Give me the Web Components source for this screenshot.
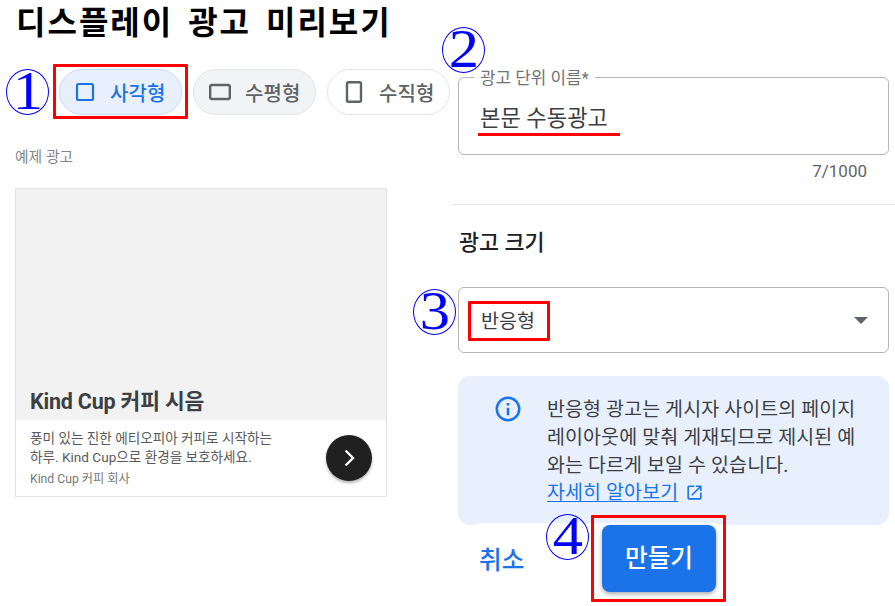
<!DOCTYPE html>
<html lang="ko"><head><meta charset="utf-8">
<style>
html,body{margin:0;padding:0;background:#fff}
body{width:895px;height:606px;overflow:hidden;position:relative;font-family:Roboto,"Noto Sans CJK KR",sans-serif;color:#3c4043}
</style></head><body>
<preview-page></preview-page>
<script>
const KR='Roboto,"Noto Sans CJK KR",sans-serif';
function def(name,css,html){
  customElements.define(name,class extends HTMLElement{
    constructor(){super();const r=this.attachShadow({mode:'open'});r.innerHTML=`<style>${css}</style>${typeof html==='function'?html(this):html}`;}
  });
}
const icons={
 square:'<svg width="24" height="24" viewBox="0 0 24 24"><rect x="4" y="4" width="16" height="16" rx="1.5" fill="none" stroke="currentColor" stroke-width="2.2"/></svg>',
 wide:'<svg width="24" height="24" viewBox="0 0 24 24"><rect x="2.2" y="5" width="19.6" height="14" rx="1.5" fill="none" stroke="currentColor" stroke-width="2.4"/></svg>',
 tall:'<svg width="24" height="24" viewBox="0 0 24 24"><rect x="5" y="2.2" width="14" height="19.6" rx="1.5" fill="none" stroke="currentColor" stroke-width="2.4"/></svg>'
};
def('shape-chip',`
 :host{display:inline-flex;align-items:center;box-sizing:border-box;width:123px;height:46px;border-radius:23px;border:1px solid #e3e4e6;background:#fff;color:#5f6368;font:500 20px ${KR};letter-spacing:.1px;padding-left:14px;gap:13px}
 :host([active]){background:#e8f0fe;border-color:#c6dafc;color:#1a73e8;padding-left:13px}
 :host([soft]){background:#f1f3f4}
 svg{display:block}
 span{display:flex}
`,h=>`<span>${icons[h.getAttribute('icon')]}</span><slot></slot>`);

def('circle-num',`
 :host{position:absolute;box-sizing:border-box;width:43px;height:46px;border:1px solid #0000ff;border-radius:50%;display:flex;align-items:center;justify-content:center;color:#00f;font:400 55px/46px "Liberation Serif",serif;background:transparent;z-index:5}
 span{display:block;transform:translateY(-1px) scaleX(1.1)}
`,`<span><slot></slot></span>`);

def('red-box',`
 :host{position:absolute;box-sizing:border-box;border:3px solid #f00;border-radius:1px;pointer-events:none;z-index:4}
`,``);

def('ad-card',`
 :host{display:flex;flex-direction:column;box-sizing:border-box;width:372px;height:309px;border:1px solid #e2e2e2;margin-left:15px;margin-top:21px;background:#fff}
 .top{height:231px;background:#f2f2f2;display:flex;align-items:flex-end;box-sizing:border-box;padding:0 14px 4px}
 h3{margin:0;font:700 21.500px/28px ${KR};color:#3c4043;letter-spacing:-.2px}
 .bot{flex:1;display:flex;align-items:flex-start;padding:9px 14px 0 14px}
 .txt{flex:1;white-space:nowrap}
 p{margin:0;font:400 13.600px/19px ${KR};color:#5a5a5a}
 small{display:block;margin-top:4px;font:400 12.200px/16px ${KR};color:#777}
 .go{width:46px;height:46px;border-radius:50%;background:#202020;box-shadow:0 2px 3px rgba(0,0,0,.3);display:flex;align-items:center;justify-content:center;margin-top:6px;margin-left:-1px}
`,`<div class="top"><h3>Kind Cup 커피 시음</h3></div>
<div class="bot"><div class="txt"><p>풍미 있는 진한 에티오피아 커피로 시작하는<br>하루. Kind Cup으로 환경을 보호하세요.</p><small>Kind Cup 커피 회사</small></div>
<div class="go"><svg width="24" height="24" viewBox="0 0 24 24"><path d="M8.6 4.5 16 12l-7.4 7.5" fill="none" stroke="#fff" stroke-width="2.4"/></svg></div></div>`);

def('outlined-input',`
 :host{display:block;box-sizing:border-box;position:relative;height:78px;border:1px solid #b3b6ba;border-radius:6px;padding:0 21px}
 label{position:absolute;left:15px;top:-10px;background:#fff;padding:0 6px;font:400 16.900px/20px ${KR};color:#6f7377}
 div{font:400 22.200px/30px ${KR};color:#3c4043;padding-top:25px}
`,`<label>광고 단위 이름*</label><div>본문 수동광고</div>`);

def('select-box',`
 :host{display:flex;align-items:center;justify-content:space-between;box-sizing:border-box;height:66px;border:1px solid #b3b6ba;border-radius:6px;padding:3px 20px 0 22px;font:400 19.500px/26px ${KR};color:#3c4043}
 i{display:block;width:0;height:0;border-left:7px solid transparent;border-right:7px solid transparent;border-top:7px solid #5f6368;margin-top:-2px}
`,`<slot></slot><i></i>`);

def('info-box',`
 :host{display:flex;box-sizing:border-box;height:149px;background:#e8f0fe;border-radius:12px;padding:20px 20px 0 35px;gap:24px;font:400 19.500px/27.800px ${KR};color:#3c4043}
 svg{flex:none;display:block;margin-top:-2px}
 a{color:#1a73e8;text-decoration:underline;text-underline-offset:2px}
 div{white-space:nowrap;letter-spacing:.1px}
`,`<svg width="30" height="30" viewBox="0 0 24 24"><circle cx="12" cy="12" r="9" fill="none" stroke="#1a73e8" stroke-width="2"/><rect x="11" y="11" width="2" height="6" fill="#1a73e8"/><rect x="11" y="7.2" width="2" height="2" fill="#1a73e8"/></svg>
<div>반응형 광고는 게시자 사이트의 페이지<br>레이아웃에 맞춰 게재되므로 제시된 예<br>와는 다르게 보일 수 있습니다.<br><a href="#">자세히 알아보기</a><svg style="vertical-align:-3px;margin:0 0 0 7px;display:inline-block" width="19" height="19" viewBox="0 0 24 24"><path d="M19 19H5V5h7V3H5a2 2 0 0 0-2 2v14a2 2 0 0 0 2 2h14a2 2 0 0 0 2-2v-7h-2v7zM14 3v2h3.6l-9.8 9.8 1.4 1.4L19 6.400V10h2V3h-7z" fill="#1a73e8"/></svg></div>`);

def('action-bar',`
 :host{display:flex;align-items:flex-start;margin:-2px 0 0 19px;width:241px;height:81px;background:#fff;position:relative}
 .c{font:500 24.700px/30px ${KR};color:#1a73e8;margin:23px 0 0 2px;width:123px}
 .b{margin-top:2px;width:114px;height:67px;border-radius:8px;background:#1a73e8;color:#fff;font:500 24.700px/67px ${KR};text-align:center;box-shadow:0 2px 4px rgba(60,64,67,.45)}
`,`<div class="c">취소</div><div class="b">만들기</div>`);

def('left-col',`
 :host{display:block;width:450px;flex:none}
 h1{margin:0;padding:3px 0 0 16px;font:700 32px/40px ${KR};color:#000;letter-spacing:2px;word-spacing:5px;height:60px;box-sizing:border-box}
 .chips{display:flex;gap:11px;margin:9px 0 0 59px;width:400px}
 .lab{margin:32px 0 0 15px;font:400 14.800px/20px ${KR};color:#80868b}
`,`<h1>디스플레이 광고 미리보기</h1>
<div class="chips"><shape-chip active icon="square">사각형</shape-chip><shape-chip soft icon="wide">수평형</shape-chip><shape-chip icon="tall">수직형</shape-chip></div>
<div class="lab">예제 광고</div>
<ad-card></ad-card>`);

def('right-col',`
 :host{display:block;flex:1;padding:77px 6px 0 8px}
 .count{text-align:right;font:400 17px/20px ${KR};color:#5f6368;margin:6px 22px 0 0;height:23px;box-sizing:border-box}
 hr{border:0;border-top:1px solid #e3e4e6;margin:20px -6px 0 -5px}
 h2{margin:23px 0 0 1px;font:500 21.800px/30px ${KR};color:#202124}
 select-box{margin-top:29px}
 info-box{margin-top:23px}
`,`<outlined-input></outlined-input><div class="count">7/1000</div><hr><h2>광고 크기</h2>
<select-box>반응형</select-box><info-box></info-box><action-bar></action-bar>`);

def('preview-page',`
 :host{display:flex;width:895px;height:606px;position:relative}
 .u{position:absolute;left:478px;top:133px;width:142px;height:3px;background:#f00;z-index:4}
`,`<left-col></left-col><right-col></right-col>
<red-box style="left:53px;top:64px;width:135px;height:55px"></red-box>
<red-box style="left:468px;top:301px;width:82px;height:40px"></red-box>
<red-box style="left:591px;top:515px;width:135px;height:87px"></red-box>
<div class="u"></div>
<circle-num style="left:6px;top:69px">1</circle-num>
<circle-num style="left:442px;top:27px">2</circle-num>
<circle-num style="left:413px;top:289px">3</circle-num>
<circle-num style="left:546px;top:514px">4</circle-num>`);
</script></body></html>
